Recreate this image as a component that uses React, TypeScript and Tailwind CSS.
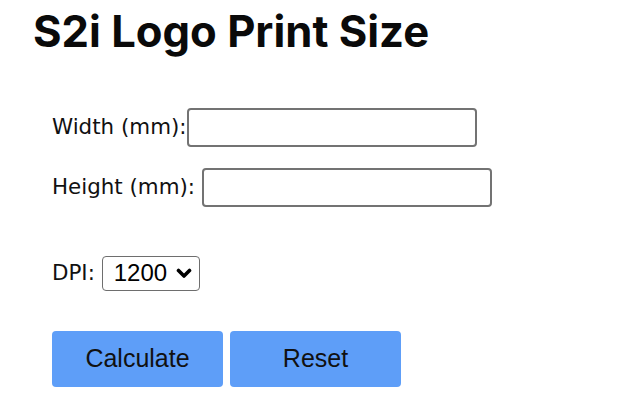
export default function App() {
  const label = "text-[21.4px] text-[#111] font-['DejaVu_Sans',sans-serif]";
  const field = "h-[39px] w-[290px] rounded-[4px] border-2 border-[#737373] bg-white";

  return (
    <div className="min-h-[400px] w-[640px] bg-white">
      <h1 className="pl-[33px] pt-[10px] font-['Inter',sans-serif] text-[43.6px] leading-none font-bold text-[#0a0a0a]">
        S2i Logo Print Size
      </h1>

      <form className="mt-[54px] flex flex-col pl-[52px]">
        <div className="flex items-center">
          <label className={label}>Width (mm):</label>
          <input type="text" className={field} />
        </div>

        <div className="mt-[21px] flex items-center">
          <label className={label + " whitespace-pre"}>Height (mm): </label>
          <input type="text" className={field} />
        </div>

        <div className="mt-[49px] flex items-center">
          <label className={label + " whitespace-pre"}>DPI: </label>
          <div className="flex h-[35px] w-[98px] items-center rounded-[4px] border border-[#6e6e6e] pr-[7px]">
            <select className="appearance-none bg-transparent pl-[11px] font-['Liberation_Sans',sans-serif] text-[24px] text-black outline-none">
              <option>1200</option>
              <option>600</option>
              <option>300</option>
            </select>
            <svg viewBox="0 0 16 11" className="ml-auto h-[11px] w-[16px]">
              <path d="M2.5 2.5l5.5 5.5 5.5-5.5" fill="none" stroke="#000" strokeWidth="3.6" strokeLinecap="round" strokeLinejoin="round" />
            </svg>
          </div>
        </div>

        <div className="mt-[40px] flex gap-[7px]">
          <button type="button" className="h-[56px] w-[171px] rounded-[4px] bg-[#5e9ef8] font-['Liberation_Sans',sans-serif] text-[25px] text-[#111]">
            Calculate
          </button>
          <button type="button" className="h-[56px] w-[171px] rounded-[4px] bg-[#5e9ef8] font-['Liberation_Sans',sans-serif] text-[25px] text-[#111]">
            Reset
          </button>
        </div>
      </form>
    </div>
  );
}
